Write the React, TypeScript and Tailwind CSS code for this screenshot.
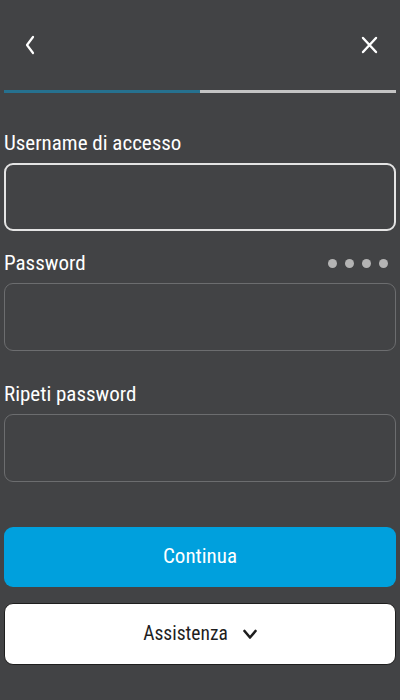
import React from "react";

const font = { fontFamily: '"Liberation Sans Narrow", "Roboto Condensed", Roboto, sans-serif' };

export default function App() {
  return (
    <div className="w-[400px] h-[700px] bg-[#424345] flex flex-col px-[4px]" style={font}>
      <div className="h-[90px] flex items-center justify-between pl-[20px] pr-[18px]">
        <svg width="12" height="20" viewBox="0 0 12 20">
          <path d="M9 2 L3 10 L9 18" stroke="white" strokeWidth="2.2" fill="none" strokeLinecap="round" strokeLinejoin="round" />
        </svg>
        <svg width="17" height="18" viewBox="0 0 17 18">
          <path d="M2 2 L15 16 M15 2 L2 16" stroke="white" strokeWidth="2.4" fill="none" strokeLinecap="round" />
        </svg>
      </div>
      <div className="flex h-[3px]">
        <div className="w-1/2 bg-[#26718f]" />
        <div className="w-1/2 bg-[#c4c4c4]" />
      </div>
      <div className="mt-[38px] h-[24px] flex items-center text-[21px] text-white leading-[24px]">Username di accesso</div>
      <div className="mt-[8px] h-[68px] rounded-[9px] border-2 border-[#e4e4e4]" />
      <div className="mt-[20px] h-[24px] flex items-center justify-between text-[21px] text-white leading-[24px]">
        <span>Password</span>
        <div className="flex gap-[8px] pr-[8px]">
          <span className="w-[9px] h-[9px] rounded-full bg-[#b4b4b4]" />
          <span className="w-[9px] h-[9px] rounded-full bg-[#b4b4b4]" />
          <span className="w-[9px] h-[9px] rounded-full bg-[#b4b4b4]" />
          <span className="w-[9px] h-[9px] rounded-full bg-[#b4b4b4]" />
        </div>
      </div>
      <div className="mt-[8px] h-[68px] rounded-[9px] border border-[#6c6d6f]" />
      <div className="mt-[31px] h-[24px] flex items-center text-[21px] text-white leading-[24px]">Ripeti password</div>
      <div className="mt-[8px] h-[68px] rounded-[9px] border border-[#6c6d6f]" />
      <div className="mt-[45px] h-[60px] rounded-[9px] bg-[#00a0dd] flex items-center justify-center text-white text-[21px]">
        Continua
      </div>
      <div className="mt-[16px] h-[62px] rounded-[9px] bg-white border border-[#1e1e1e] flex items-center justify-center gap-[15px] text-[#1e1e1e] text-[19.5px]">
        <span>Assistenza</span>
        <svg width="14" height="11" viewBox="0 0 14 11">
          <path d="M1.5 2 L7 8.5 L12.5 2" stroke="#1e1e1e" strokeWidth="2.6" fill="none" strokeLinecap="round" strokeLinejoin="round" />
        </svg>
      </div>
    </div>
  );
}
